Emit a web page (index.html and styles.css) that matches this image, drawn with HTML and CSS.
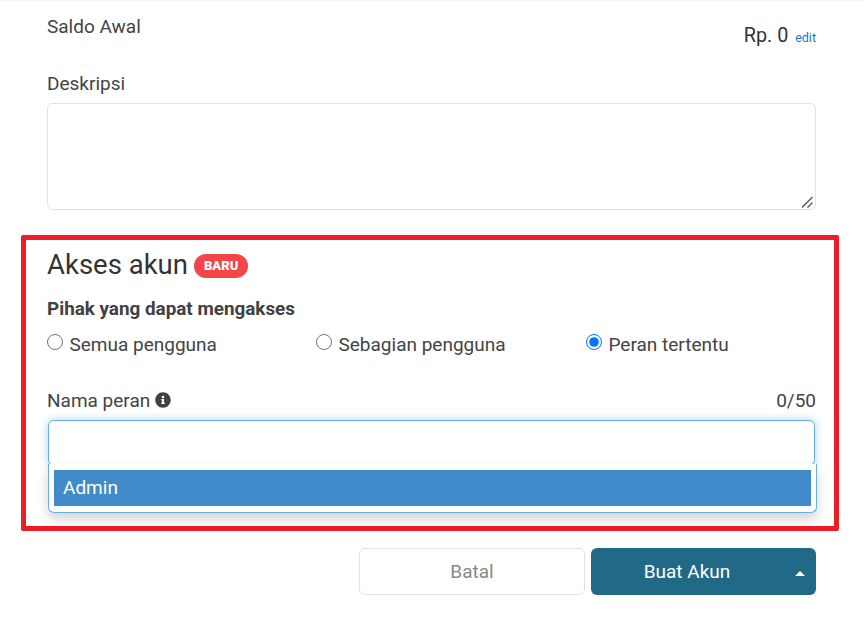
FILE: index.html
```html
<!doctype html>
<html lang="id">
<head>
  <meta charset="utf-8" />
  <meta name="viewport" content="width=device-width,initial-scale=1" />
  <title>Buat Akun</title>
  <link rel="stylesheet" href="styles.css">
</head>
<body>

<div class="form-wrap">
  <div class="section">
    <div class="saldo-row">
      <span class="label">Saldo Awal</span>
      <span class="saldo-val">Rp. 0 <a class="edit-link" href="#">edit</a></span>
    </div>
    <label class="label desc-label" for="deskripsi">Deskripsi</label>
    <div class="desc-wrap">
      <textarea class="desc-input" id="deskripsi"></textarea>
      <svg class="desc-grip" viewBox="0 0 12 12"><path d="M1 11.5 11.5 1M6.5 11.5 11.5 6.5"/></svg>
    </div>
  </div>

  <div class="akses-box">
    <h2 class="akses-title">Akses akun <span class="badge-new">BARU</span></h2>
    <div class="akses-sub">Pihak yang dapat mengakses</div>
    <div class="radio-row">
      <label class="radio-item"><input type="radio" name="akses"> Semua pengguna</label>
      <label class="radio-item"><input type="radio" name="akses"> Sebagian pengguna</label>
      <label class="radio-item"><input type="radio" name="akses" checked> Peran tertentu</label>
    </div>
    <div class="role-head">
      <span class="label">Nama peran
        <svg class="info-icon" viewBox="0 0 512 512"><path d="M256 8C119.043 8 8 119.083 8 256c0 136.997 111.043 248 248 248s248-111.003 248-248C504 119.083 392.957 8 256 8zm0 110c23.196 0 42 18.804 42 42s-18.804 42-42 42-42-18.804-42-42 18.804-42 42-42zm56 254c0 6.627-5.373 12-12 12h-88c-6.627 0-12-5.373-12-12v-24c0-6.627 5.373-12 12-12h12v-64h-12c-6.627 0-12-5.373-12-12v-24c0-6.627 5.373-12 12-12h64c6.627 0 12 5.373 12 12v100h12c6.627 0 12 5.373 12 12v24z"/></svg>
      </span>
      <span class="label">0/50</span>
    </div>
    <div class="role-select">
      <input class="role-input" type="text">
      <div class="role-menu">
        <div class="role-option">Admin</div>
      </div>
    </div>
  </div>

  <div class="section actions">
    <button class="btn btn-cancel">Batal</button>
    <button class="btn btn-submit">
      <span class="btn-main">Buat Akun</span>
      <span class="btn-caret"></span>
    </button>
  </div>
</div>

</body>
</html>
```

FILE: styles.css
```css
html,body{margin:0;background:#fff;}
body{font-family:Roboto,"Liberation Sans",sans-serif;font-size:19px;color:#414141;height:617px;overflow:hidden;}
.form-wrap{padding:0 25px 0 21px;border-top:1px solid #f6f6f6;}
.section{padding:0 23px 0 26px;}
.label{line-height:24px;color:#444;}
.saldo-row{display:flex;justify-content:space-between;padding-top:14px;height:50px;box-sizing:content-box;}
.saldo-val{margin-top:9px;line-height:24px;color:#333;font-size:19.8px;}
.edit-link{font-size:12.5px;color:#1878c8;text-decoration:none;margin-left:2px;}
.desc-label{display:block;margin-top:7px;}
.desc-wrap{position:relative;margin-top:7px;}
.desc-input{display:block;box-sizing:border-box;width:100%;height:107px;border:1px solid #e2e2e2;border-radius:6px;outline:none;resize:none;}
.desc-grip{position:absolute;right:3px;bottom:2px;width:12px;height:12px;fill:none;stroke:#555;stroke-width:1.4;}
.akses-box{margin-top:25px;height:296px;box-sizing:border-box;border:5px solid #ee1c25;border-radius:2px;padding:5px 18px 0 21px;}
.akses-title{margin:0;font-size:27.5px;font-weight:400;line-height:40px;color:#333;display:flex;align-items:center;gap:6px;}
.badge-new{display:inline-block;background:#f44548;color:#fff;font-size:13px;font-weight:900;line-height:24px;height:24px;padding:0 10px;border-radius:12px;margin-top:2px;}
.akses-sub{margin-top:12px;font-size:18.85px;font-weight:700;line-height:24px;color:#414141;}
.radio-row{display:grid;grid-template-columns:269px 270px 1fr;margin-top:12px;line-height:24px;}
.radio-item{display:flex;align-items:center;gap:6.5px;color:#444;white-space:nowrap;}
.radio-item input{width:16px;height:16px;margin:0;position:relative;top:-3px;}
.role-head{display:flex;justify-content:space-between;margin-top:32px;}
.info-icon{width:16px;height:16px;fill:#414141;vertical-align:-1px;}
.role-select{position:relative;margin-top:7px;}
.role-input{display:block;box-sizing:border-box;width:calc(100% - 2px);margin:0 1px;height:46px;border:1px solid #66afe9;border-radius:6px;outline:none;box-shadow:0 0 8px rgba(102,175,233,.6);}
.role-menu{position:absolute;left:1px;right:-1px;top:44px;box-sizing:border-box;height:49px;padding:6px 5px;background:#fff;border:1px solid #66afe9;border-top:none;border-radius:0 0 6px 6px;box-shadow:0 6px 12px rgba(0,0,0,.175);}
.role-option{height:36px;line-height:36px;padding-left:9px;background:#428bca;color:#fff;}
.actions{display:flex;justify-content:flex-end;gap:6px;margin-top:17px;}
.btn{font-family:inherit;font-size:19px;height:47px;border-radius:6px;padding:0;box-sizing:border-box;}
.btn-cancel{width:226px;background:#fff;border:1px solid #e2e2e2;color:#888;}
.btn-submit{width:225px;background:#216a87;border:none;color:#fff;display:flex;align-items:center;}
.btn-main{flex:1;text-align:center;}
.btn-caret{width:33px;display:flex;justify-content:center;}
.btn-caret::before{content:"";border-left:5px solid transparent;border-right:5px solid transparent;border-bottom:5px solid #fff;margin-top:4px;}
```
